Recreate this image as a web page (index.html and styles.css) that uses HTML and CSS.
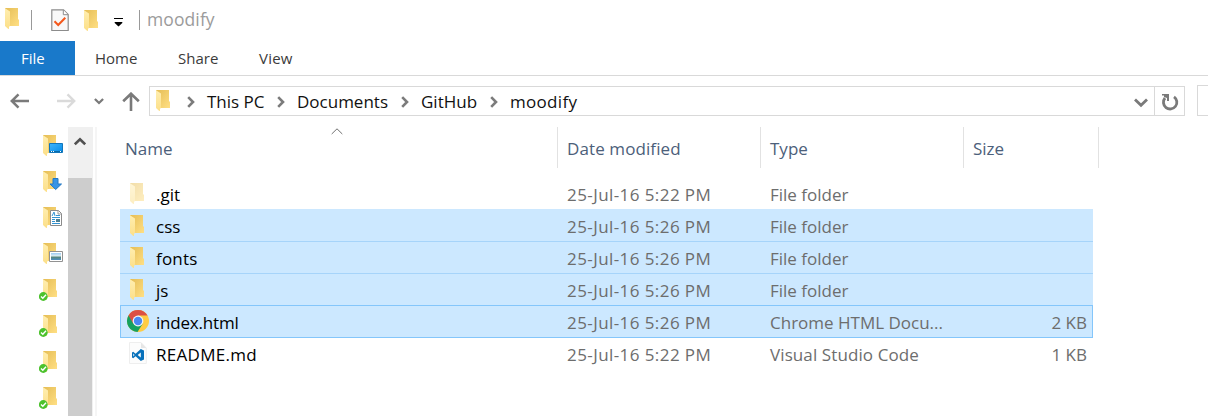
FILE: index.html
```html
<!DOCTYPE html>
<html lang="en">
<head>
<meta charset="utf-8">
<title>moodify</title>
<link rel="stylesheet" href="styles.css">
</head>
<body>
<svg class="defs" width="0" height="0" aria-hidden="true">
  <defs>
    <linearGradient id="back" x1="0" y1="0" x2="1" y2="1"><stop offset="0" stop-color="#e5bd55"/><stop offset="1" stop-color="#ffdf84"/></linearGradient>
    <linearGradient id="flap" x1="0" y1="0" x2="0" y2="1"><stop offset="0" stop-color="#ffeeb0"/><stop offset="1" stop-color="#fcdf88"/></linearGradient>
    <linearGradient id="blue" x1="0" y1="0" x2="1" y2="1"><stop offset="0" stop-color="#3fb4fb"/><stop offset="1" stop-color="#058be8"/></linearGradient>
    <linearGradient id="photo" x1="0" y1="0" x2="0" y2="1"><stop offset="0" stop-color="#9ccbf2"/><stop offset=".45" stop-color="#e2f0f4"/><stop offset=".55" stop-color="#568577"/><stop offset="1" stop-color="#4e8ec2"/></linearGradient>
    <symbol id="folder" viewBox="0 0 15 22"><path d="M0 0H13V11.5H14V18H4Z" fill="url(#back)"/><path d="M0 0.3L5 3.5V18.3L4 18.5V21L3 20.8L0 18Z" fill="url(#flap)"/></symbol>
    <symbol id="crumb" viewBox="0 0 8 12"><path d="M1.2 1.2L6 6L1.2 10.8" fill="none" stroke="#7b7b7b" stroke-width="2.6"/></symbol>
  </defs>
</svg>
<header class="titlebar">
  <svg class="folder title-folder"><use href="#folder"/></svg>
  <i class="rule rule-a"></i>
  <svg class="props" width="18" height="23" viewBox="0 0 18 23"><path d="M.8.8H12.5L17.2 5.5V21.5H.8Z" fill="#f8f8f8" stroke="#8c8c8c" stroke-width="1.2"/><path d="M12.3 1V5.7H17" fill="#fff" stroke="#8c8c8c"/><path d="M3.5 12.3L7.2 16L14.3 8.7" fill="none" stroke="#f4581c" stroke-width="2"/></svg>
  <svg class="folder quick-folder"><use href="#folder"/></svg>
  <svg class="customize" width="9" height="9" viewBox="0 0 9 9"><path d="M0 .5H9" stroke="#000"/><path d="M.7 4H8.3V5L4.5 8.4L.7 5Z"/></svg>
  <i class="rule rule-b"></i>
  <span class="title">moodify</span>
</header>
<nav class="tabs"><span class="tab file"><b>File</b></span><span class="tab home">Home</span><span class="tab share">Share</span><span class="tab view">View</span></nav>
<div class="navbar">
  <svg class="back" width="20" height="16" viewBox="0 0 20 16"><path d="M19 8H2M8.5 1.3L1.8 8L8.5 14.7" fill="none" stroke="#7a7a7a" stroke-width="2.5"/></svg>
  <svg class="forward" width="20" height="16" viewBox="0 0 20 16"><path d="M1 8H18M11.5 1.3L18.2 8L11.5 14.7" fill="none" stroke="#dadada" stroke-width="2.4"/></svg>
  <svg class="recent" width="10" height="7" viewBox="0 0 10 7"><path d="M.9 1L5 5L9.1 1" fill="none" stroke="#7a7a7a" stroke-width="2.3"/></svg>
  <svg class="up" width="18" height="19" viewBox="0 0 18 19"><path d="M9 19V2M1.2 9.3L9 1.7L16.8 9.3" fill="none" stroke="#7a7a7a" stroke-width="2.6"/></svg>
  <div class="address">
    <svg class="folder address-folder"><use href="#folder"/></svg>
    <svg class="sep s1"><use href="#crumb"/></svg><span class="crumb pc">This PC</span>
    <svg class="sep s2"><use href="#crumb"/></svg><span class="crumb docs">Documents</span>
    <svg class="sep s3"><use href="#crumb"/></svg><span class="crumb github">GitHub</span>
    <svg class="sep s4"><use href="#crumb"/></svg><span class="crumb moodify">moodify</span>
    <svg class="history" width="14" height="10" viewBox="0 0 14 10"><path d="M1 1.4L7 7.3L13 1.4" fill="none" stroke="#7a7a7a" stroke-width="2.8"/></svg>
    <span class="refresh"><svg width="18" height="18" viewBox="0 0 18 18"><path d="M4 5A6.7 6.7 0 1 0 13 3.8" fill="none" stroke="#7a7a7a" stroke-width="2.8"/><path d="M1 1H8V8H6V5L3 4V2.6H1Z" fill="#7a7a7a"/></svg></span>
  </div>
  <div class="search"></div>
</div>
<main class="content">
  <aside class="tree">
    <svg viewBox="0 0 28 36"><use href="#folder" x="4" y="8" width="15" height="22"/><path d="M10.5 16.5H23.5V25.5H10.5Z" fill="url(#blue)" stroke="#1276bb"/><path d="M11 24.5H23" stroke="#086aa8"/><path d="M12 24.5H13M14 24.5H15M21 24.5H22" stroke="#fff"/></svg>
    <svg viewBox="0 0 28 36"><use href="#folder" x="4" y="8" width="15" height="22"/><path d="M14 15.5H19V21H22.5L16.7 26.5L11 21H14Z" fill="#3794e6" stroke="#2278c3"/></svg>
    <svg viewBox="0 0 28 36"><use href="#folder" x="4" y="8" width="15" height="22"/><path d="M11.5 11.5H19.5L22.5 14.5V26.5H11.5Z" fill="#fff" stroke="#8b8b8b"/><path d="M19 11.5V15H22.5" fill="none" stroke="#999"/><path d="M13 17L15 13L16 17M17 16.5H21M13 18.5H21M13 20.5H16M13 22.5H16M13 24.5H21" fill="none" stroke="#3293d3"/><path d="M17 20H21V23H17Z" fill="#4e8195"/></svg>
    <svg viewBox="0 0 28 36"><use href="#folder" x="4" y="8" width="15" height="22"/><path d="M10.5 16.5H23.5V26.5H10.5Z" fill="#fff" stroke="#929292"/><path d="M12 18H22V25H12Z" fill="url(#photo)"/></svg>
    <svg viewBox="0 0 28 36"><use href="#folder" x="4" y="8" width="15" height="22"/><circle cx="4.3" cy="25.5" r="4.4" fill="#4cc22d"/><path d="M2 25.5L3.8 27.2L7 23.8" fill="none" stroke="#fff" stroke-width="1.4"/></svg>
    <svg viewBox="0 0 28 36"><use href="#folder" x="4" y="8" width="15" height="22"/><circle cx="4.3" cy="25.5" r="4.4" fill="#4cc22d"/><path d="M2 25.5L3.8 27.2L7 23.8" fill="none" stroke="#fff" stroke-width="1.4"/></svg>
    <svg viewBox="0 0 28 36"><use href="#folder" x="4" y="8" width="15" height="22"/><circle cx="4.3" cy="25.5" r="4.4" fill="#4cc22d"/><path d="M2 25.5L3.8 27.2L7 23.8" fill="none" stroke="#fff" stroke-width="1.4"/></svg>
    <svg viewBox="0 0 28 36"><use href="#folder" x="4" y="8" width="15" height="22"/><circle cx="4.3" cy="25.5" r="4.4" fill="#4cc22d"/><path d="M2 25.5L3.8 27.2L7 23.8" fill="none" stroke="#fff" stroke-width="1.4"/></svg>
  </aside>
  <div class="scrollbar"><div class="scroll-up"><svg width="12" height="9" viewBox="0 0 12 9"><path d="M.8 7.3L6 2.2L11.2 7.3" fill="none" stroke="#505050" stroke-width="2.6"/></svg></div><div class="thumb"></div></div>
  <div class="divider"></div>
  <section class="files">
    <div class="columns">
      <div class="column"><span class="h-name">Name</span><svg class="sort" width="12" height="7" viewBox="0 0 12 7"><path d="M.7 6L6 .8L11.3 6" fill="none" stroke="#707070"/></svg></div>
      <div class="column"><span class="h-date">Date modified</span></div>
      <div class="column"><span class="h-type">Type</span></div>
      <div class="column"><span class="h-size">Size</span></div>
    </div>
    <div class="row hidden"><svg class="folder"><use href="#folder"/></svg><span class="name n-git">.git</span><span class="date">25-Jul-16 5:22 PM</span><span class="type">File folder</span><span class="size"></span></div>
    <div class="row selected"><svg class="folder"><use href="#folder"/></svg><span class="name n-css">css</span><span class="date">25-Jul-16 5:26 PM</span><span class="type">File folder</span><span class="size"></span></div>
    <div class="row selected"><svg class="folder"><use href="#folder"/></svg><span class="name n-fonts">fonts</span><span class="date">25-Jul-16 5:26 PM</span><span class="type">File folder</span><span class="size"></span></div>
    <div class="row selected"><svg class="folder"><use href="#folder"/></svg><span class="name n-js">js</span><span class="date">25-Jul-16 5:26 PM</span><span class="type">File folder</span><span class="size"></span></div>
    <div class="row selected focused"><svg class="chrome" viewBox="0 0 24 24"><circle cx="12" cy="12" r="11" fill="#fc4"/><path d="M12 12L2.5 6.4A11 11 0 0 0 11.5 23L16.7 14.7Z" fill="#16a160"/><path d="M2.5 6.4L7.3 14.7L12 6.5H21.6A11 11 0 0 0 2.5 6.4Z" fill="#dc5044"/><circle cx="12" cy="12" r="5.4" fill="#f4f5f5"/><circle cx="12" cy="12" r="4.2" fill="#4a88f2"/></svg><span class="name n-index">index.html</span><span class="date">25-Jul-16 5:26 PM</span><span class="type t-chrome">Chrome HTML Docu...</span><span class="size">2 KB</span></div>
    <div class="row"><svg class="vscode" viewBox="0 0 18 22"><path d="M.5.5H12L17.3 6V21.5H.5Z" fill="#fcfcfc" stroke="#eee"/><path d="M12 .5V6H17.3Z" fill="#e6e6e6"/><path d="M11.8 7L15 8.4V17.5L11.8 19L6.6 14.3L4.2 16.2L3 15.5V10.5L4.2 9.8L6.6 11.7ZM11.8 10.5L8.7 13L11.8 15.5ZM4.3 11.6V14.4L5.6 13Z" fill="#0871bb" fill-rule="evenodd"/></svg><span class="name n-readme">README.md</span><span class="date">25-Jul-16 5:22 PM</span><span class="type t-code">Visual Studio Code</span><span class="size">1 KB</span></div>
  </section>
</main>
</body>
</html>
```
FILE: styles.css
```css
* { box-sizing: border-box; }
body { margin: 0; width: 1208px; height: 416px; overflow: hidden; background: #fff; color: #111; font: 17px/24px "Open Sans", "Noto Sans", sans-serif; }
svg { display: block; flex: none; }
span { white-space: nowrap; }
.defs { position: absolute; }
.folder { width: 15px; height: 22px; }
.titlebar { display: flex; height: 41px; align-items: flex-start; }
.title-folder { margin: 8px 0 0 5px; }
.rule { width: 1px; height: 20px; margin-top: 10px; background: #999; }
.rule-a { margin-left: 11px; }
.props { margin: 9px 0 0 19px; }
.quick-folder { margin: 10px 0 0 15px; }
.customize { margin: 18px 0 0 15px; }
.rule-b { margin-left: 16px; }
.title { margin: 7px 0 0 7px; color: #9b9b9b; font-size: 17.5px; letter-spacing: .1px; }
.tabs { display: flex; height: 35px; border-bottom: 1px solid #d9d9d9; font-size: 15px; line-height: 35px; color: #3b3b3b; }
.file { width: 75px; height: 34px; padding-left: 21px; background: #1979ca; color: #fff; }
.file b { font-weight: 400; }
.home { width: 83px; padding-left: 20px; }
.share { width: 81px; padding-left: 20px; }
.view { padding-left: 20px; letter-spacing: .2px; }
.navbar { display: flex; height: 51px; align-items: flex-start; }
.back { margin: 17px 0 0 10px; }
.forward { margin: 17px 0 0 26px; }
.recent { margin: 22px 0 0 18px; }
.up { margin: 16px 0 0 18px; }
.address { display: flex; width: 1036px; height: 30px; margin: 10px 0 0 9px; border: 1px solid #d9d9d9; }
.address-folder { margin: 3px 0 0 6px; }
.crumb { line-height: 29px; width: 60px; }
.sep { width: 8px; height: 12px; margin-top: 9px; }
.s1 { margin-left: 16px; }
.pc { margin-left: 12px; width: 58px; }
.s2 { margin-left: 12px; }
.docs { margin-left: 12px; width: 92px; }
.s3 { margin-left: 12px; }
.github { margin-left: 12px; width: 58px; }
.s4 { margin-left: 11px; }
.moodify { margin-left: 12px; width: 70px; letter-spacing: .3px; }
.history { margin: 11px 0 0 auto; }
.refresh { width: 30px; margin-left: 6px; padding: 6px 0 0 6px; border-left: 1px solid #d9d9d9; }
.search { width: 11px; height: 31px; margin: 9px 0 0 12px; border: solid #d9d9d9; border-width: 1px 0 1px 1px; }
.content { display: flex; height: 289px; }
.tree { width: 68px; padding-left: 39px; }
.tree svg { width: 28px; height: 36px; }
.scrollbar { width: 25px; background: #f0f0f0; display: flex; flex-direction: column; }
.scroll-up { height: 51px; padding: 10px 0 0 6px; }
.thumb { width: 24px; flex: 1; background: #cdcdcd; }
.divider { width: 2px; margin-left: 2px; background: #f5f5f5; }
.files { width: 1111px; padding-left: 23px; }
.columns { display: flex; height: 41px; margin-bottom: 9px; color: #4c607a; line-height: 43px; }
.column { display: flex; width: 203px; padding-left: 9px; border-right: 1px solid #e2e2e2; }
.column:first-child { width: 438px; padding-left: 5px; }
.column:last-child { width: 135px; }
.h-name { width: 206px; }
.h-date { letter-spacing: .1px; }
.sort { margin-top: 1px; }
.row { display: flex; width: 973px; height: 32px; align-items: flex-start; line-height: 35px; color: #6d6d6d; }
.folder + .name { margin-left: 11px; }
.row .folder { margin: 6px 0 0 10px; }
.name { width: 411px; color: #000; }
.selected { background: #cce8ff; box-shadow: inset 0 1px #a6d4fa; }
.hidden + .selected { box-shadow: none; }
.selected + .focused { height: 33px; box-shadow: inset 0 0 0 1px #84c6fb; }
.focused + .row { margin-top: -1px; }
.hidden .folder { opacity: .5; }
.date { width: 203px; letter-spacing: .42px; }
.type { width: 194px; }
.t-code { letter-spacing: .1px; }
.size { width: 123px; text-align: right; }
.n-fonts { letter-spacing: .2px; }
.n-index { letter-spacing: -.2px; }
.n-readme { letter-spacing: .3px; }
.chrome { width: 24px; height: 24px; margin: 4px 0 0 6px; }
.chrome + .name { margin-left: 6px; }
.vscode { width: 18px; height: 22px; margin: 5px 0 0 9px; }
.vscode + .name { margin-left: 9px; }
```
